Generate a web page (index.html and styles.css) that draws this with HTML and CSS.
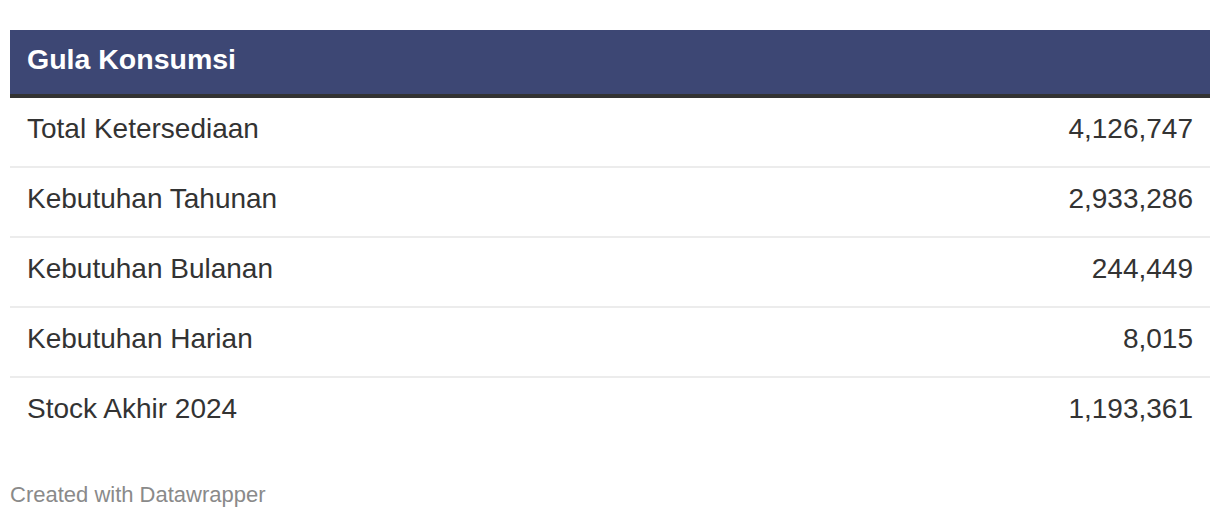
FILE: index.html
```html
<!DOCTYPE html>
<html>
<head>
<meta charset="utf-8">
<link rel="stylesheet" href="styles.css">
</head>
<body>
<div class="chart">
  <table class="tbl">
    <thead>
      <tr><th colspan="2">Gula Konsumsi</th></tr>
    </thead>
    <tbody>
      <tr><td>Total Ketersediaan</td><td class="num">4,126,747</td></tr>
      <tr><td>Kebutuhan Tahunan</td><td class="num">2,933,286</td></tr>
      <tr><td>Kebutuhan Bulanan</td><td class="num">244,449</td></tr>
      <tr><td>Kebutuhan Harian</td><td class="num">8,015</td></tr>
      <tr><td>Stock Akhir 2024</td><td class="num">1,193,361</td></tr>
    </tbody>
  </table>
  <div class="footer">Created with Datawrapper</div>
</div>
</body>
</html>
```
FILE: styles.css
```css
html, body {
  margin: 0;
  padding: 0;
  background: #ffffff;
}
.chart {
  padding: 30px 10px 0;
  font-family: "Liberation Sans", Arial, Helvetica, sans-serif;
}
.tbl {
  width: 100%;
  border-collapse: collapse;
}
.tbl th {
  background: #3d4774;
  color: #ffffff;
  text-align: left;
  font-size: 28.5px;
  font-weight: bold;
  height: 59px;
  padding: 0 17px 5px;
  border-bottom: 4px solid #333333;
}
.tbl td {
  font-size: 28px;
  color: #333333;
  height: 62px;
  padding: 0 17px 6px;
  border-bottom: 2px solid #ececec;
}
.tbl tbody tr:last-child td {
  border-bottom: none;
}
.tbl td.num {
  text-align: right;
}
.footer {
  margin-top: 36px;
  font-size: 22px;
  color: #8a8a8a;
}
```
